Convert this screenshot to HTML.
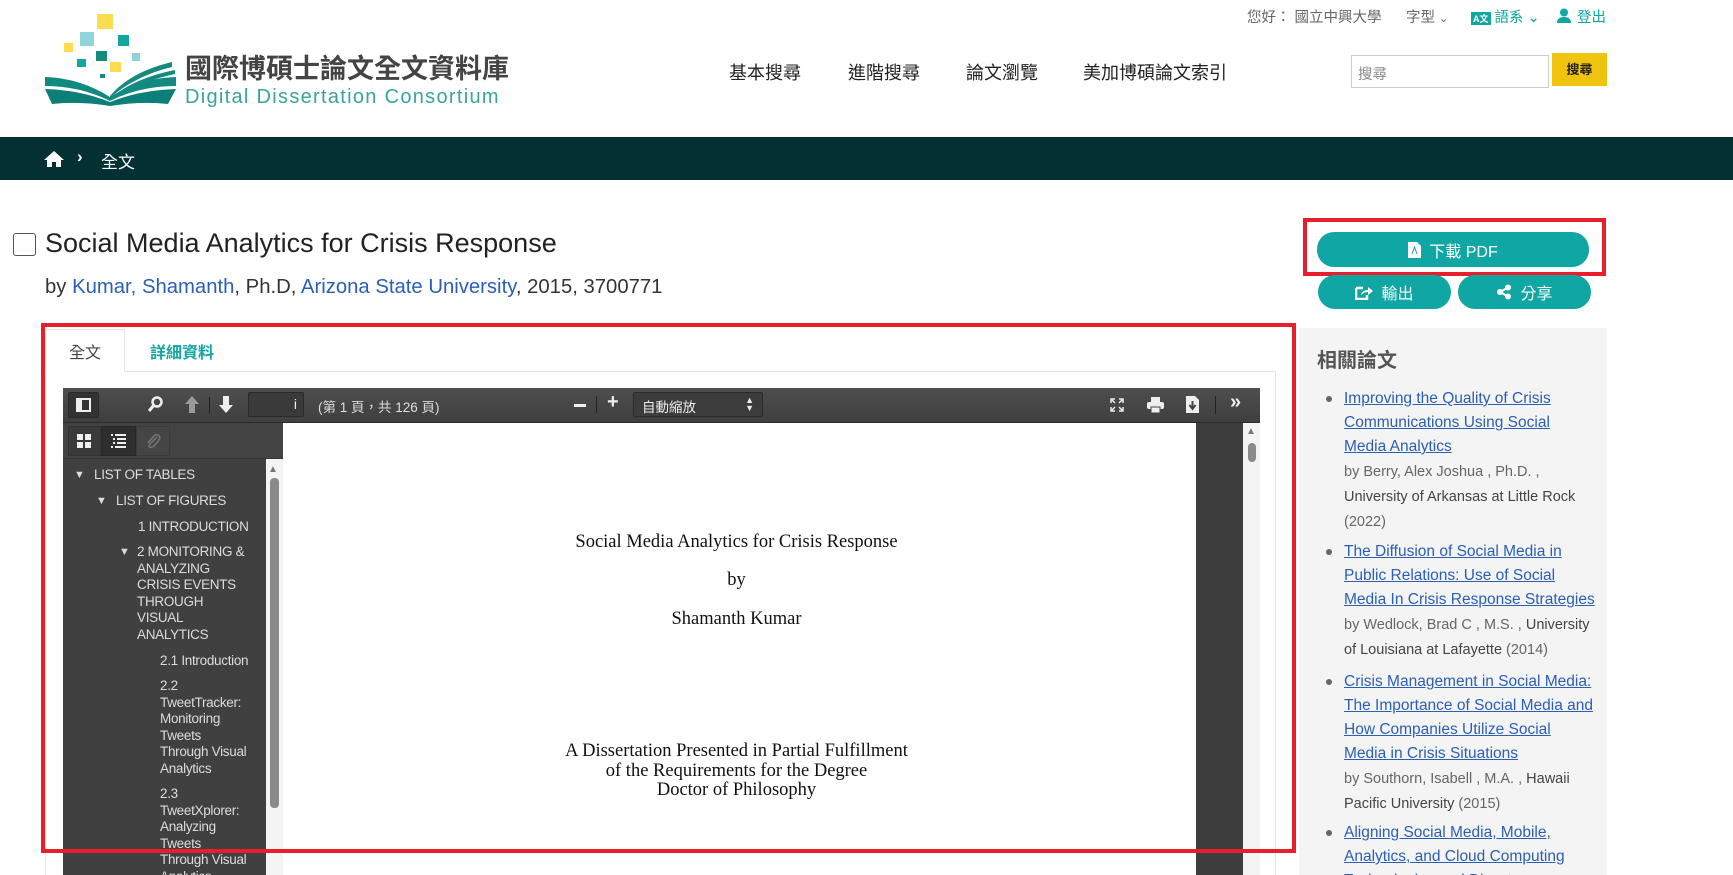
<!DOCTYPE html>
<html style="height:875px;overflow:hidden"><head><meta charset="utf-8">
<style>
*{margin:0;padding:0;box-sizing:border-box}
body{width:1733px;height:875px;overflow:hidden;background:#fff;font-family:"Liberation Sans","Noto Sans CJK TC",sans-serif;color:#333}
#w{position:relative;width:1733px;height:875px;overflow:hidden}
.a{position:absolute;white-space:nowrap}
.top{font-size:14.5px;color:#666;top:6px}
.nav{font-size:18px;color:#222;top:59px}
.btn{position:absolute;background:#0fa6a3;color:#fff;border-radius:17px;font-size:16px;display:flex;align-items:center;justify-content:center;gap:8px}
.ol{position:absolute;color:#dcdcdc;font-size:13.5px;line-height:16.6px;white-space:nowrap;letter-spacing:-0.3px}
.pg{position:absolute;left:283px;width:907px;text-align:center;font-family:"Liberation Serif",serif;font-size:18.5px;color:#111}
.side{position:absolute;left:1344px;width:270px;font-size:15.5px;line-height:24px;white-space:nowrap}
.side a{color:#2b5fb4;text-decoration:underline}
.meta{color:#666;font-size:14.5px;line-height:25px;margin-top:1px}
.meta b{color:#444;font-weight:normal}
.bul{position:absolute;left:-18px;width:6px;height:6px;border-radius:3px;background:#666}
</style></head><body><div id="w">

<svg class="a" style="left:0;top:0" width="180" height="112">
<rect x="97" y="14" width="16" height="15" fill="#fddc4f"/>
<rect x="80" y="32" width="14" height="14" fill="#90d3dc"/>
<rect x="118" y="35" width="11" height="11" fill="#14a69c"/>
<rect x="64" y="43" width="9" height="9" fill="#fddc4f"/>
<rect x="96" y="51" width="11" height="10" fill="#178a80"/>
<rect x="132" y="53" width="8" height="8" fill="#90d3dc"/>
<rect x="77" y="59" width="9" height="8" fill="#14a69c"/>
<rect x="110" y="62" width="11" height="10" fill="#fddc4f"/>
<rect x="100" y="74" width="5" height="4" fill="#178a80"/>
<path d="M45 77 Q80 78 110 97 Q140 78 176 77 L176 86 Q140 86 110 101 Q80 86 45 86Z" fill="#118a82"/>
<path d="M45 89 Q80 90 110 102 Q140 90 176 89 L168 104 Q140 101 110 106 Q80 101 52 104Z" fill="#0b7f78"/>
<path d="M110 96 Q130 72 172 62 L172 67 Q135 76 110 98Z" fill="#178a80"/>
<path d="M112 97 Q135 78 175 70 L175 74 Q138 82 112 99Z" fill="#178a80"/>
</svg>
<div class="a" style="left:185px;top:47px;font-size:27px;color:#444;font-weight:bold">國際博碩士論文全文資料庫</div>
<div class="a" style="left:185px;top:86px;font-size:20px;color:#3aa3a0;letter-spacing:1.3px">Digital Dissertation Consortium</div>

<div class="a top" style="left:1247px">您好： 國立中興大學</div>
<div class="a top" style="left:1406px">字型 <span style="font-size:11px">&#8964;</span></div>
<div class="a top" style="left:1471px;color:#0fa6a3"><span style="display:inline-block;background:#0fa6a3;color:#fff;font-size:9px;padding:0 2px;font-weight:bold">A文</span> 語系 ⌄</div>
<svg class="a" style="left:1557px;top:8px" width="14" height="15"><circle cx="7" cy="4.5" r="4" fill="#0fa6a3"/><path d="M0 15 Q0 9 7 9 Q14 9 14 15Z" fill="#0fa6a3"/></svg>
<div class="a top" style="left:1577px;color:#0fa6a3">登出</div>

<div class="a nav" style="left:729px">基本搜尋</div>
<div class="a nav" style="left:848px">進階搜尋</div>
<div class="a nav" style="left:966px">論文瀏覽</div>
<div class="a nav" style="left:1083px">美加博碩論文索引</div>
<div class="a" style="left:1351px;top:55px;width:198px;height:33px;border:1px solid #ccc;font-size:14.5px;color:#888;padding:7px 6px">搜尋</div>
<div class="a" style="left:1552px;top:53px;width:55px;height:33px;background:#f0c30f;font-size:13px;font-weight:bold;color:#222;text-align:center;line-height:33px">搜尋</div>

<div class="a" style="left:0;top:137px;width:1733px;height:43px;background:#033133"></div>
<svg class="a" style="left:44px;top:150px" width="20" height="17"><path d="M10 1 L20 10 L17 10 L17 17 L12 17 L12 12 L8 12 L8 17 L3 17 L3 10 L0 10Z" fill="#fff"/></svg>
<div class="a" style="left:77px;top:147px;color:#fff;font-size:17px;font-weight:bold">›</div>
<div class="a" style="left:101px;top:148px;color:#fff;font-size:17px">全文</div>

<div class="a" style="left:13px;top:233px;width:23px;height:23px;border:1.5px solid #555;border-radius:3px"></div>
<div class="a" style="left:45px;top:228px;font-size:27px;color:#222">Social Media Analytics for Crisis Response</div>
<div class="a" style="left:45px;top:276px;font-size:20.3px;color:#333">by <span style="color:#2b5fb4">Kumar, Shamanth</span>, Ph.D, <span style="color:#2b5fb4">Arizona State University</span>, 2015, 3700771</div>

<div class="btn" style="left:1317px;top:232px;width:272px;height:35px"><svg width="13" height="16"><path d="M0 0 H9 L13 4 V16 H0Z" fill="#fff"/><path d="M4 12 L6.5 5 L9 12" stroke="#0fa6a3" fill="none"/></svg>下載 PDF</div>
<div class="a" style="left:1303px;top:218px;width:303px;height:58px;border:4px solid #e81f2a"></div>
<div class="btn" style="left:1318px;top:275px;width:133px;height:34px"><svg width="18" height="15"><path d="M1 3 H8 M1 3 V14 H12 V10" stroke="#fff" stroke-width="2.5" fill="none"/><path d="M6 10 Q7 5 13 5 V2 L18 6 L13 10 V7 Q9 7 6 10Z" fill="#fff"/></svg>輸出</div>
<div class="btn" style="left:1458px;top:275px;width:133px;height:34px"><svg width="16" height="16"><circle cx="12" cy="3.5" r="3" fill="#fff"/><circle cx="12" cy="12.5" r="3" fill="#fff"/><circle cx="4" cy="8" r="3" fill="#fff"/><path d="M4 8 L12 3.5 M4 8 L12 12.5" stroke="#fff" stroke-width="2"/></svg>分享</div>

<div class="a" style="left:45px;top:371px;width:1231px;height:560px;border:1px solid #e5e5e5"></div>
<div class="a" style="left:45px;top:329px;width:80px;height:43px;border:1px solid #e5e5e5;border-bottom:1px solid #fff;background:#fff"></div>
<div class="a" style="left:69px;top:339px;font-size:16px;color:#444">全文</div>
<div class="a" style="left:150px;top:339px;font-size:16px;color:#0fa6a3;font-weight:bold">詳細資料</div>

<div class="a" style="left:63px;top:388px;width:1197px;height:35px;background:linear-gradient(#4e4e4e,#3f3f3f);border-bottom:1px solid #2b2b2b"></div>
<div class="a" style="left:68px;top:392px;width:31px;height:26px;background:#333;border:1px solid #2a2a2a;border-radius:2px"></div>
<div class="a" style="left:76px;top:398px;width:15px;height:14px;border:2px solid #eee;border-left-width:6px"></div>
<svg class="a" style="left:148px;top:396px" width="16" height="16"><circle cx="9" cy="6" r="4.5" stroke="#eee" stroke-width="2.5" fill="none"/><path d="M6 9 L1 15" stroke="#eee" stroke-width="3"/></svg>
<svg class="a" style="left:184px;top:396px" width="16" height="17"><path d="M8 0 L15 8 H11 V17 H5 V8 H1Z" fill="#999"/></svg>
<div class="a" style="left:209px;top:397px;width:1px;height:17px;background:#222"></div>
<svg class="a" style="left:218px;top:396px" width="16" height="17"><path d="M8 17 L15 9 H11 V0 H5 V9 H1Z" fill="#eee"/></svg>
<div class="a" style="left:248px;top:392px;width:56px;height:25px;background:#3a3a3a;border:1px solid #2a2a2a;border-radius:2px;color:#eee;text-align:right;padding-right:6px;font-size:14px;line-height:22px">i</div>
<div class="a" style="left:318px;top:396px;font-size:13.5px;color:#ddd">(第 1 頁，共 126 頁)</div>
<div class="a" style="left:574px;top:395px;width:12px;height:3px;background:#eee;margin-top:9px"></div>
<div class="a" style="left:596px;top:396px;width:1px;height:17px;background:#222"></div>
<div class="a" style="left:607px;top:391px;font-size:20px;color:#eee;font-weight:bold">+</div>
<div class="a" style="left:633px;top:392px;width:130px;height:25px;background:#3c3c3c;border:1px solid #2a2a2a;border-radius:2px;color:#eee;font-size:13.5px;padding:3px 8px">自動縮放<span style="position:absolute;right:8px;top:3px;font-size:9px;line-height:8px">▲<br>▼</span></div>
<svg class="a" style="left:1110px;top:398px" width="14" height="14" stroke="#eee" stroke-width="1.5" fill="none"><path d="M1 5 V1 H5 M9 1 H13 V5 M13 9 V13 H9 M5 13 H1 V9 M2 2 L5 5 M12 2 L9 5 M12 12 L9 9 M2 12 L5 9"/></svg>
<svg class="a" style="left:1147px;top:397px" width="17" height="16"><rect x="4" y="0" width="9" height="5" fill="#eee"/><rect x="0" y="5" width="17" height="7" rx="2" fill="#eee"/><rect x="4" y="10" width="9" height="6" fill="#eee" stroke="#444"/></svg>
<svg class="a" style="left:1186px;top:396px" width="13" height="17"><path d="M0 0 H9 L13 4 V17 H0Z" fill="#eee"/><path d="M6.5 5 V12 M3.5 9 L6.5 13 L9.5 9" stroke="#444" stroke-width="2" fill="none"/></svg>
<div class="a" style="left:1215px;top:396px;width:1px;height:18px;background:#222"></div>
<div class="a" style="left:1230px;top:391px;font-size:20px;color:#eee;font-weight:bold">»</div>

<div class="a" style="left:63px;top:423px;width:220px;height:36px;background:#434343;border-bottom:1px solid #333"></div>
<div class="a" style="left:68px;top:426px;width:33px;height:30px;background:#3a3a3a;border:1px solid #333"></div>
<div class="a" style="left:101px;top:426px;width:35px;height:30px;background:#2e2e2e;border:1px solid #282828"></div>
<div class="a" style="left:136px;top:426px;width:34px;height:30px;background:#454545;border:1px solid #3a3a3a"></div>
<svg class="a" style="left:77px;top:434px" width="15" height="14" fill="#eee"><rect width="6" height="6"/><rect x="8" width="6" height="6"/><rect y="8" width="6" height="6"/><rect x="8" y="8" width="6" height="6"/></svg>
<svg class="a" style="left:111px;top:433px" width="15" height="15" fill="#eee"><rect x="0" y="1" width="2" height="2"/><rect x="4" y="1" width="11" height="2"/><rect x="2" y="5" width="2" height="2"/><rect x="6" y="5" width="9" height="2"/><rect x="2" y="9" width="2" height="2"/><rect x="6" y="9" width="9" height="2"/><rect x="0" y="13" width="2" height="2"/><rect x="4" y="13" width="11" height="2"/></svg>
<svg class="a" style="left:145px;top:433px" width="16" height="16"><path d="M12 4 L5 11 Q3 13 5 14 Q7 15 9 13 L14 7 Q16 4 13 2 Q10 1 8 4 L3 10" stroke="#777" stroke-width="1.5" fill="none"/></svg>
<div class="a" style="left:63px;top:459px;width:203px;height:440px;background:#404040"></div>
<div class="a" style="left:266px;top:459px;width:17px;height:440px;background:#f4f4f4"></div>
<div class="a" style="left:268px;top:464px;font-size:10px;color:#777">▲</div>
<div class="a" style="left:270px;top:478px;width:9px;height:330px;background:#8a8a8a;border-radius:4px"></div>

<div class="ol" style="left:74px;top:467px;font-size:11px">▼</div><div class="ol" style="left:94px;top:467px">LIST OF TABLES</div>
<div class="ol" style="left:96px;top:493px;font-size:11px">▼</div><div class="ol" style="left:116px;top:493px">LIST OF FIGURES</div>
<div class="ol" style="left:138px;top:519px">1 INTRODUCTION</div>
<div class="ol" style="left:119px;top:544px;font-size:11px">▼</div><div class="ol" style="left:137px;top:544px">2 MONITORING &amp;<br>ANALYZING<br>CRISIS EVENTS<br>THROUGH<br>VISUAL<br>ANALYTICS</div>
<div class="ol" style="left:160px;top:653px">2.1 Introduction</div>
<div class="ol" style="left:160px;top:678px">2.2<br>TweetTracker:<br>Monitoring<br>Tweets<br>Through Visual<br>Analytics</div>
<div class="ol" style="left:160px;top:786px">2.3<br>TweetXplorer:<br>Analyzing<br>Tweets<br>Through Visual<br>Analytics</div>

<div class="a" style="left:283px;top:423px;width:913px;height:480px;background:#fff"></div>
<div class="a" style="left:1196px;top:423px;width:47px;height:480px;background:#3d3d3d"></div>
<div class="a" style="left:1243px;top:423px;width:17px;height:480px;background:#f4f4f4"></div>
<div class="a" style="left:1246px;top:426px;font-size:10px;color:#777">▲</div>
<div class="a" style="left:1248px;top:443px;width:8px;height:19px;background:#8a8a8a;border-radius:4px"></div>
<div class="pg" style="top:532px">Social Media Analytics for Crisis Response</div>
<div class="pg" style="top:570px">by</div>
<div class="pg" style="top:609px">Shamanth Kumar</div>
<div class="pg" style="top:742px;line-height:19.5px">A Dissertation Presented in Partial Fulfillment<br>of the Requirements for the Degree<br>Doctor of Philosophy</div>

<div class="a" style="left:41px;top:323px;width:1255px;height:530px;border:4px solid #e81f2a"></div>

<div class="a" style="left:1299px;top:328px;width:308px;height:600px;background:#f4f4f4"></div>
<div class="a" style="left:1317px;top:344px;font-size:20px;color:#555;font-weight:bold">相關論文</div>
<div class="side" style="top:387px"><span class="bul" style="top:9px"></span><a>Improving the Quality of Crisis<br>Communications Using Social<br>Media Analytics</a><div class="meta">by Berry, Alex Joshua , Ph.D. ,<br><b>University of Arkansas at Little Rock</b><br>(2022)</div></div>
<div class="side" style="top:540px"><span class="bul" style="top:9px"></span><a>The Diffusion of Social Media in<br>Public Relations: Use of Social<br>Media In Crisis Response Strategies</a><div class="meta">by Wedlock, Brad C , M.S. , <b>University</b><br><b>of Louisiana at Lafayette</b> (2014)</div></div>
<div class="side" style="top:670px"><span class="bul" style="top:9px"></span><a>Crisis Management in Social Media:<br>The Importance of Social Media and<br>How Companies Utilize Social<br>Media in Crisis Situations</a><div class="meta">by Southorn, Isabell , M.A. , <b>Hawaii</b><br><b>Pacific University</b> (2015)</div></div>
<div class="side" style="top:821px"><span class="bul" style="top:9px"></span><a>Aligning Social Media, Mobile,<br>Analytics, and Cloud Computing<br>Technologies and Disaster</a></div>
</div></body></html>
